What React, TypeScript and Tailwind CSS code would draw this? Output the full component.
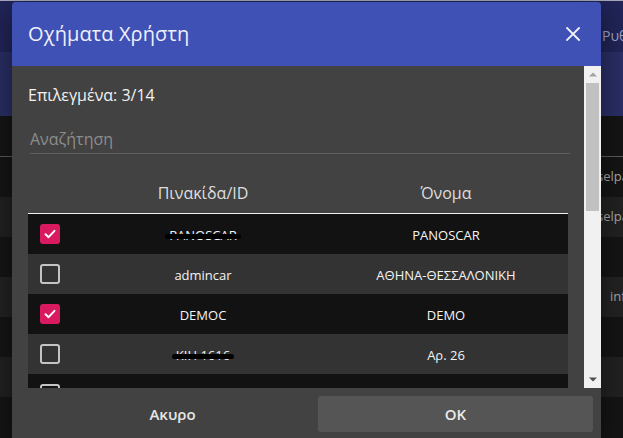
import React from "react";

type Row = { checked: boolean; plate: string; name: string; redact?: boolean };

const rows: Row[] = [
  { checked: true, plate: "PANOSCAR", name: "PANOSCAR", redact: true },
  { checked: false, plate: "admincar", name: "ΑΘΗΝΑ-ΘΕΣΣΑΛΟΝΙΚΗ" },
  { checked: true, plate: "DEMOC", name: "DEMO" },
  { checked: false, plate: "KIH 1616", name: "Αρ. 26", redact: true },
  { checked: false, plate: "", name: "" },
];

function Checkbox({ checked }: { checked: boolean }) {
  if (checked) {
    return (
      <div className="w-5 h-5 rounded-[3px] bg-[#d81b60] flex items-center justify-center">
        <svg width="14" height="14" viewBox="0 0 14 14" fill="none">
          <path d="M2.5 7.2 L5.6 10.2 L11.5 3.8" stroke="#fff" strokeWidth="1.9" strokeLinecap="round" strokeLinejoin="round" />
        </svg>
      </div>
    );
  }
  return <div className="w-5 h-5 rounded-[3px] border-2 border-[#c4c4c4]" />;
}

export default function App() {
  const bgRows = [
    { bg: "bg-[#151515]", text: "selpa", indent: "pl-[597px]" },
    { bg: "bg-[#222222]", text: "selpa", indent: "pl-[597px]" },
    { bg: "bg-[#151515]", text: "", indent: "" },
    { bg: "bg-[#232323]", text: "info", indent: "pl-[610px]" },
    { bg: "bg-[#151515]", text: "", indent: "" },
    { bg: "bg-[#222222]", text: "", indent: "" },
    { bg: "bg-[#151515]", text: "", indent: "" },
  ];

  return (
    <div className="relative w-[623px] h-[438px] overflow-hidden bg-[#151515] font-['Open_Sans','Noto_Sans',sans-serif]">
      {/* dimmed background app */}
      <div className="flex flex-col">
        <div className="h-px bg-[#a9abbd]" />
        <div className="h-[51px] bg-[#212558] pt-[26px] pl-[602px] text-[14px] leading-[18px] text-[#a3a7cc] whitespace-nowrap overflow-hidden">
          Ρυθμίσεις
        </div>
        <div className="h-[64px] bg-[#2a2f66]" />
        <div className="h-[40px] bg-[#151515]" />
        <div className="h-px bg-[#5c5c5c]" />
        {bgRows.map((r, i) => (
          <div
            key={i}
            className={`h-[40px] ${r.bg} ${r.indent} flex items-center text-[13px] text-[#a9a9a9] whitespace-nowrap overflow-hidden`}
          >
            {r.text}
          </div>
        ))}
      </div>

      {/* dialog */}
      <div className="absolute left-[12px] top-[2px] w-[589px] h-[440px] rounded-t-[4px] overflow-hidden bg-[#424242] flex flex-col shadow-[0_8px_30px_rgba(0,0,0,0.5)]">
        <div className="h-[64px] shrink-0 bg-[#3f51b5] flex items-center justify-between pl-4 pr-[21px]">
          <span className="text-[20px] text-[#eef0fa] tracking-[0.1px]">Οχήματα Χρήστη</span>
          <svg width="14" height="14" viewBox="0 0 14 14">
            <path d="M1 1 L13 13 M13 1 L1 13" stroke="#f4f5fb" strokeWidth="1.8" strokeLinecap="square" />
          </svg>
        </div>

        <div className="h-[322px] shrink-0 flex">
          <div className="flex-1 overflow-hidden px-4 pt-[18px]">
            <div className="text-[16px] leading-[22px] font-medium text-[#f2f2f2]">Επιλεγμένα: 3/14</div>

            <div className="mt-[19px] ml-[2px] mr-[-2px] h-[29px] pt-1 border-b border-[#5e5e5e]">
              <div className="text-[16px] leading-[20px] text-[#8c8c8c]">Αναζήτηση</div>
            </div>

            <div className="mt-4">
              <div className="grid grid-cols-[54px_242px_1fr] h-[44px] pt-[3px] items-center border-b border-[#f0f0f0] text-[16px] text-[#dedede]">
                <div />
                <div className="text-center">Πινακίδα/ID</div>
                <div className="text-center">Όνομα</div>
              </div>
              {rows.map((r, i) => (
                <div
                  key={i}
                  className={`grid grid-cols-[54px_242px_1fr] h-[40px] items-center text-[13px] text-[#f4f4f4] ${
                    i % 2 === 0 ? "bg-[#121212]" : "bg-[#333333]"
                  }`}
                >
                  <div className="pl-3">
                    <Checkbox checked={r.checked} />
                  </div>
                  <div className="flex justify-center pt-[3px]">
                    <span className="relative">
                      {r.plate}
                      {r.redact && (
                        <span className="absolute left-[-4px] right-[-4px] top-[8px] h-[5px] rounded-full bg-black" />
                      )}
                    </span>
                  </div>
                  <div className="text-center pt-[3px]">{r.name}</div>
                </div>
              ))}
            </div>
          </div>

          <div className="w-[17px] shrink-0 bg-[#f1f1f1] flex flex-col">
            <div className="h-[17px] flex items-center justify-center">
              <svg width="8" height="5" viewBox="0 0 8 5">
                <path d="M0 4.5 L4 0.5 L8 4.5 Z" fill="#a3a3a3" />
              </svg>
            </div>
            <div className="mx-[2px] h-[128px] bg-[#c1c1c1]" />
            <div className="flex-1" />
            <div className="h-[17px] flex items-center justify-center">
              <svg width="8" height="5" viewBox="0 0 8 5">
                <path d="M0 0.5 L8 0.5 L4 4.5 Z" fill="#505050" />
              </svg>
            </div>
          </div>
        </div>

        <div className="flex justify-end gap-2 pr-2 pt-2">
          <button className="w-[275px] h-9 rounded-[3px] text-[15px] font-semibold text-[#e6e6e6]">Ακυρο</button>
          <button className="w-[275px] h-9 rounded-[3px] bg-[#555555] text-[15px] font-semibold text-[#ececec]">OK</button>
        </div>
      </div>
    </div>
  );
}
